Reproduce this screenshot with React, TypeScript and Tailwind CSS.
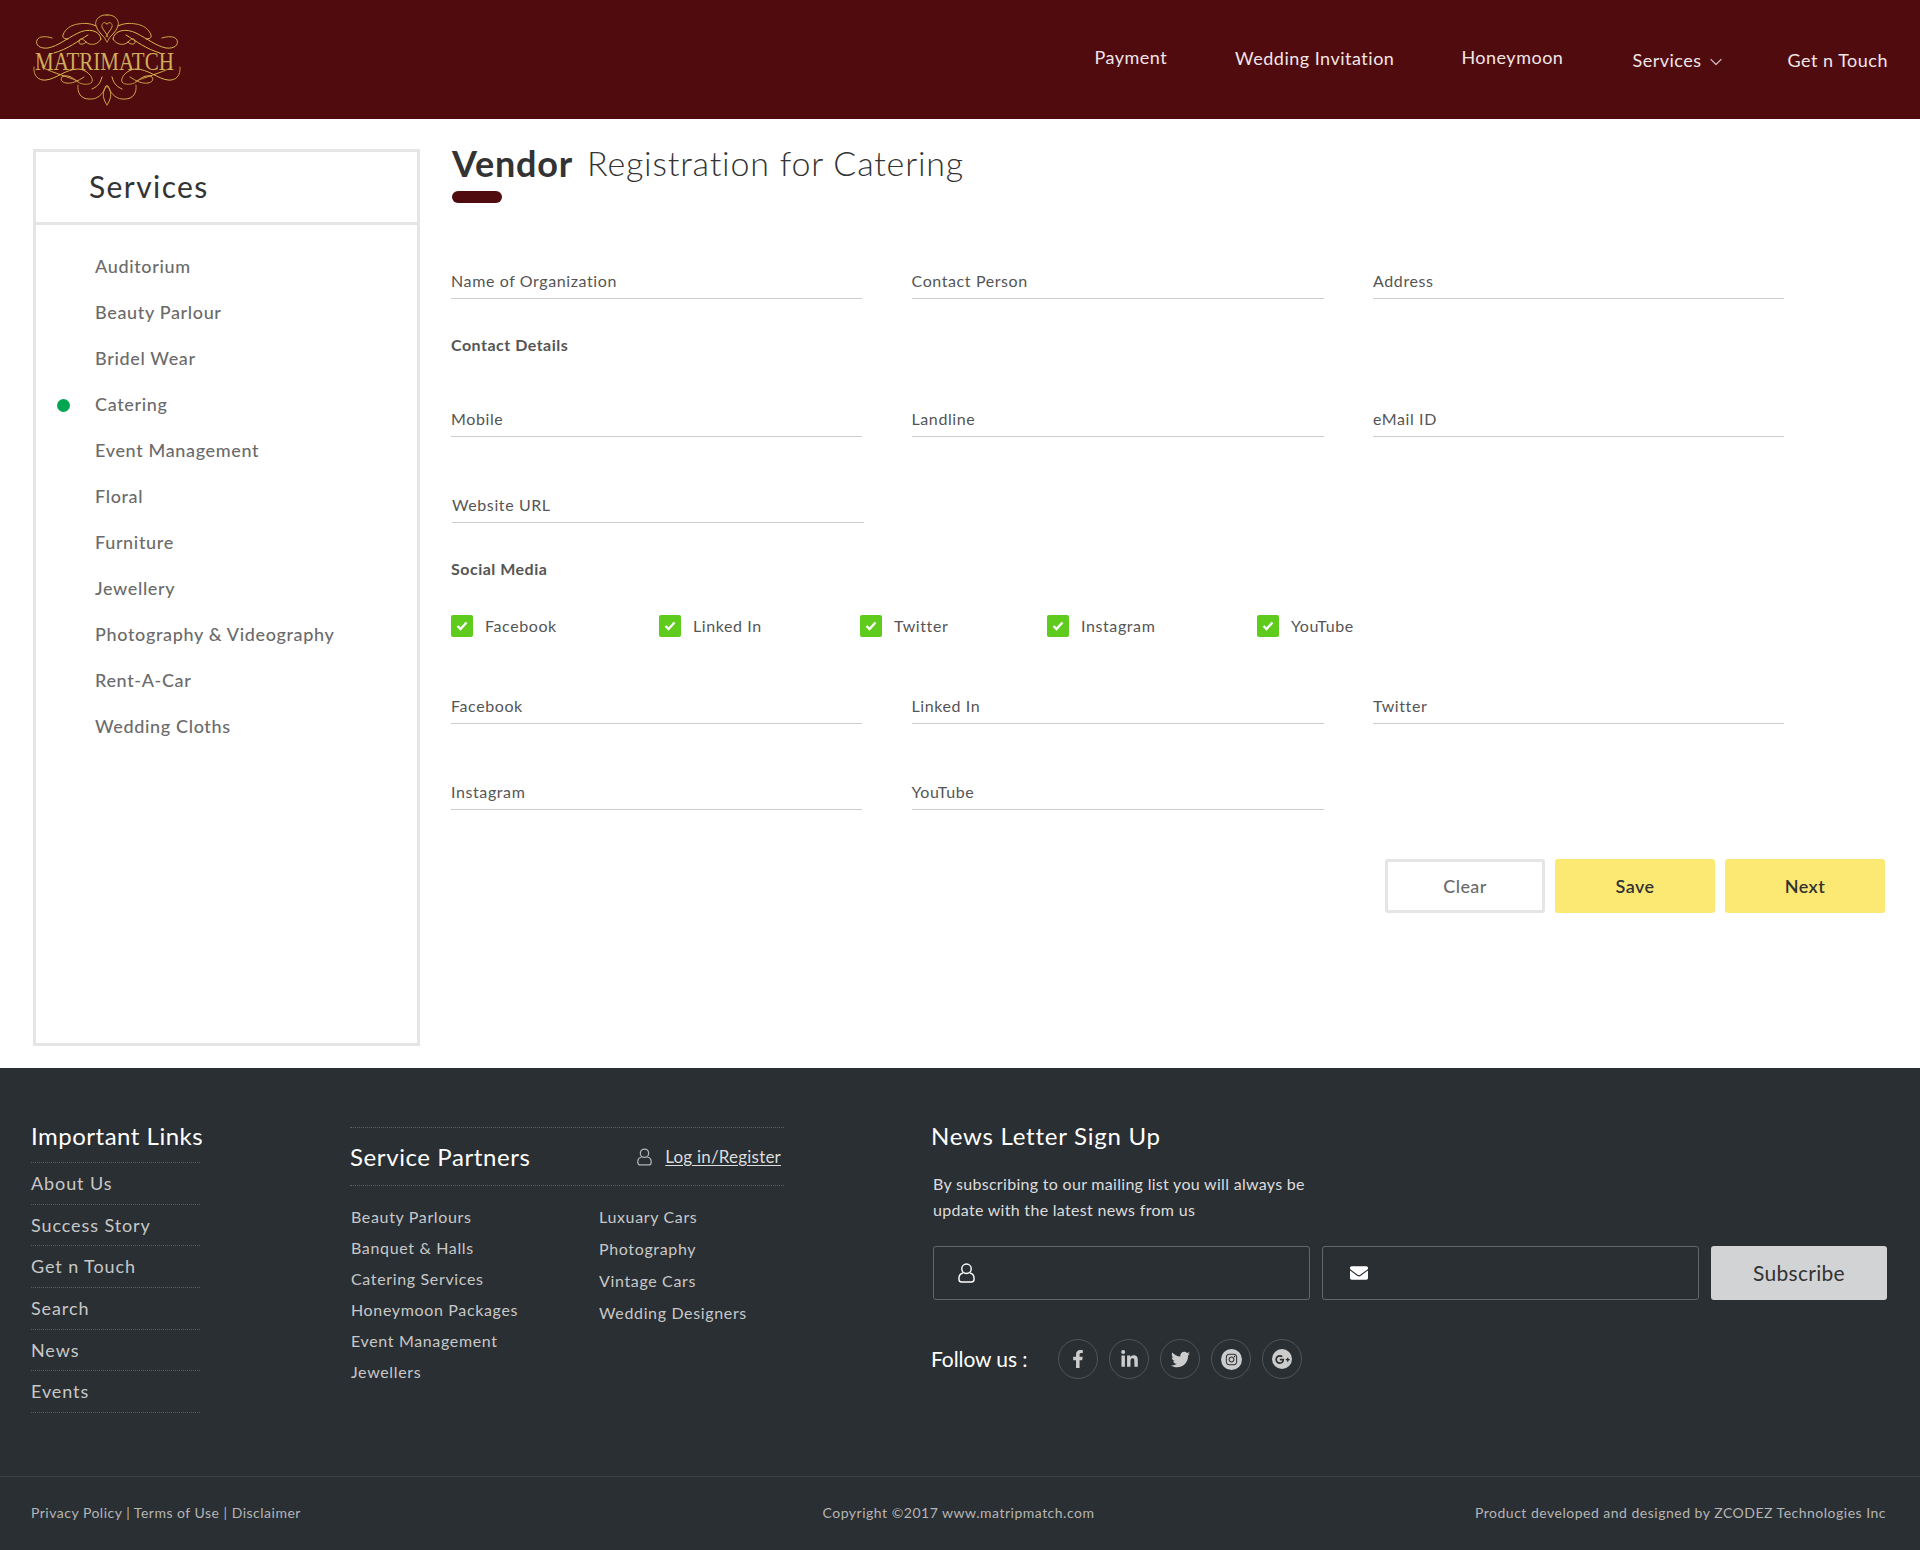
import { ChevronDown } from 'lucide-react';
import { FaEnvelope, FaFacebookF, FaGooglePlusG, FaInstagram, FaLinkedinIn, FaTwitter } from 'react-icons/fa';

const font = "font-['Lato','Open_Sans',sans-serif]";

const services = [
  'Auditorium',
  'Beauty Parlour',
  'Bridel Wear',
  'Catering',
  'Event Management',
  'Floral',
  'Furniture',
  'Jewellery',
  'Photography & Videography',
  'Rent-A-Car',
  'Wedding Cloths',
];

const socials = [
  { name: 'Facebook', width: 'w-[208px]' },
  { name: 'Linked In', width: 'w-[201px]' },
  { name: 'Twitter', width: 'w-[187px]' },
  { name: 'Instagram', width: 'w-[210px]' },
  { name: 'YouTube', width: 'w-[120px]' },
];

const importantLinks = ['About Us', 'Success Story', 'Get n Touch', 'Search', 'News', 'Events'];
const partnersLeft = ['Beauty Parlours', 'Banquet & Halls', 'Catering Services', 'Honeymoon Packages', 'Event Management', 'Jewellers'];
const partnersRight = ['Luxuary Cars', 'Photography', 'Vintage Cars', 'Wedding Designers'];

function Logo() {
  const half = (
    <g fill="none" stroke="url(#gold)" strokeWidth="1" strokeLinecap="round">
      <path d="M73 0 C66 -1 60 5 62 11 C64 18 70 20 73 27" />
      <path d="M73 9 C71 6 67 8 68 12 C69 15 72 17 74 22" />
      <path d="M67 24 C66 15 54 13 44 18 C32 24 24 31 14 33 C6 34 1 30 3 25 C5 21 12 21 18 23" />
      <path d="M62 11 C56 8 50 8 44 9 C37 10 31 14 29 20 C28 23 31 24 34 24" />
      <path d="M67 24 C64 30 56 31 52 27 C49 24 46 22 45 26 C44 30 50 30 52 27" />
      <path d="M54 20 C44 26 34 34 20 38" />
      <path d="M0 52 C-1 60 4 66 12 65 C22 64 32 54 44 54 C52 54 60 62 58 67 C56 70 48 70 44 67 C40 64 36 60 30 61 C26 62 26 67 32 68 C38 69 44 66 50 62" />
      <path d="M8 52 C14 56 28 60 44 66" />
      <path d="M44 70 C43 78 47 84 55 84 C63 85 69 79 71 73 C72 70 73 70 73 72" />
      <path d="M71 73 C68 79 69 84 73 90" />
      <path d="M58 74 C62 72 66 70 68 62" />
    </g>
  );
  return (
    <svg viewBox="-1 -1 148 92" className="w-[148px] h-[92px]">
      <defs>
        <linearGradient id="gold" x1="0" y1="0" x2="1" y2="1">
          <stop offset="0" stopColor="#b98a3a" />
          <stop offset="0.5" stopColor="#deb952" />
          <stop offset="1" stopColor="#b98a3a" />
        </linearGradient>
      </defs>
      {half}
      <g transform="translate(146 0) scale(-1 1)">{half}</g>
      <text transform="translate(1 55) scale(1 1.2)" fontFamily="'Liberation Serif', serif" fontSize="21" fill="#cfae5a">
        MATRIMATCH
      </text>
    </svg>
  );
}

function UserIcon({ className }: { className: string }) {
  return (
    <svg viewBox="0 0 18 21" fill="none" stroke="currentColor" strokeWidth="1.5" className={className}>
      <circle cx="9" cy="6" r="5" />
      <path d="M5.5 10.5 C3 11 1 13 1 16 V17 C1 19 2.5 20 4 20 H14 C15.5 20 17 19 17 17 V16 C17 13 15 11 12.5 10.5" />
    </svg>
  );
}

function Field({ label, className = '' }: { label: string; className?: string }) {
  return (
    <div className={`h-[40px] pt-[10px] flex items-start border-b border-[#cccccc] text-[16px] leading-[24px] text-[#555555] tracking-[0.6px] ${className}`}>
      {label}
    </div>
  );
}

function Header() {
  return (
    <header className="h-[119px] bg-[#500b0f] flex items-center justify-between pl-[33px] pr-[32px]">
      <Logo />
      <nav className="flex items-center text-[18px] text-[#f1e6e6] tracking-[0.5px]">
        <a className="mr-[68px] -mt-[4px]">Payment</a>
        <a className="mr-[67px] -mt-[3px]">Wedding Invitation</a>
        <a className="mr-[69px] -mt-[4px]">Honeymoon</a>
        <a className="mr-[62px] mt-[1px] flex items-center gap-[4px]">
          Services <ChevronDown size={20} strokeWidth={1.5} className="text-[#c9b3b3] mt-[3px]" />
        </a>
        <a className="mt-[1px]">Get n Touch</a>
      </nav>
    </header>
  );
}

function Sidebar() {
  return (
    <aside className="w-[387px] h-[897px] shrink-0 border-[3px] border-[#e5e5e5]">
      <div className="h-[73px] border-b-[3px] border-[#e5e5e5] pl-[53px] pb-[2px] flex items-center text-[30px] text-[#333333] tracking-[1.4px]">
        Services
      </div>
      <ul className="pt-[18px]">
        {services.map((item) => (
          <li key={item} className="relative h-[46px] pl-[59px] flex items-center text-[18px] font-medium text-[#6b6b6b] tracking-[0.65px]">
            {item === 'Catering' && <span className="absolute left-[21px] top-[18px] w-[13px] h-[13px] rounded-full bg-[#00a651]" />}
            {item}
          </li>
        ))}
      </ul>
    </aside>
  );
}

function VendorForm() {
  return (
    <section className="flex-1 pr-[35px]">
      <h1 className="h-[42px] -mt-[7px] pl-[1px] flex items-center text-[34px] leading-[42px] text-[#333333] font-light tracking-[0.8px]">
        <b className="font-bold text-[36px] mr-[14px]">Vendor</b> Registration for Catering
      </h1>
      <div className="mt-[7px] ml-[1px] w-[50px] h-[12px] rounded-[6px] bg-[#500b0f]" />

      <div className="mt-[56px] grid grid-cols-[411px_412px_411px] gap-x-[49.5px]">
        <Field label="Name of Organization" />
        <Field label="Contact Person" />
        <Field label="Address" />
      </div>
      <h3 className="mt-[34px] h-[24px] leading-[24px] text-[16px] font-bold text-[#555555] tracking-[0.5px]">Contact Details</h3>

      <div className="mt-[40px] grid grid-cols-[411px_412px_411px] gap-x-[49.5px]">
        <Field label="Mobile" />
        <Field label="Landline" />
        <Field label="eMail ID" />
      </div>
      <div className="mt-[46px] grid grid-cols-[411px_412px_411px] gap-x-[49.5px]">
        <Field label="Website URL" className="ml-[1px] w-[412px]" />
      </div>
      <h3 className="mt-[34px] h-[24px] leading-[24px] text-[16px] font-bold text-[#555555] tracking-[0.5px]">Social Media</h3>

      <div className="mt-[33px] flex items-center h-[24px]">
        {socials.map((s) => (
          <label key={s.name} className={`${s.width} flex items-center gap-[12px] text-[16px] text-[#555555] tracking-[0.6px]`}>
            <span className="w-[22px] h-[22px] rounded-[2px] bg-[#5ecb1d] flex items-center justify-center">
              <svg viewBox="0 0 12 10" className="w-[12px] h-[10px]" fill="none" stroke="#ffffff" strokeWidth="2.4">
                <path d="M1.5 5 L4.5 8 L10.5 1.5" />
              </svg>
            </span>
            {s.name}
          </label>
        ))}
      </div>

      <div className="mt-[46px] grid grid-cols-[411px_412px_411px] gap-x-[49.5px]">
        <Field label="Facebook" />
        <Field label="Linked In" />
        <Field label="Twitter" />
      </div>
      <div className="mt-[46px] grid grid-cols-[411px_412px_411px] gap-x-[49.5px]">
        <Field label="Instagram" />
        <Field label="YouTube" />
      </div>

      <div className="mt-[49px] flex justify-end gap-[10px] text-[18px] tracking-[0.4px]">
        <button className="w-[160px] h-[54px] rounded-[3px] border-[3px] border-[#e5e5e5] text-[#6b6b6b] font-medium">Clear</button>
        <button className="w-[160px] h-[54px] rounded-[3px] bg-[#fbe974] text-[#333333] font-semibold">Save</button>
        <button className="w-[160px] h-[54px] rounded-[3px] bg-[#fbe974] text-[#333333] font-semibold">Next</button>
      </div>
    </section>
  );
}

function SocialCircle({ children }: { children: React.ReactNode }) {
  return (
    <span className="w-[40px] h-[40px] rounded-full border border-[#50555a] flex items-center justify-center text-[#cccccc]">
      {children}
    </span>
  );
}

function Footer() {
  return (
    <footer className="h-[482px] bg-[#2a2f33] flex flex-col">
      <div className="flex-1 flex pl-[31px] pr-[33px] pt-[52px]">
        <div className="w-[169px] shrink-0">
          <h4 className="h-[42px] text-[24px] leading-[32px] text-white tracking-[0.5px] whitespace-nowrap">Important Links</h4>
          <ul className="border-t border-dotted border-[#5a5e62]">
            {importantLinks.map((l) => (
              <li key={l} className="h-[41.7px] flex items-center border-b border-dotted border-[#5a5e62] text-[18px] text-[#c8c8c8] tracking-[0.9px]">
                {l}
              </li>
            ))}
          </ul>
        </div>

        <div className="w-[434px] ml-[150px] shrink-0 mt-[7px]">
          <div className="h-[59px] flex items-center justify-between pr-[3px] border-y border-dotted border-[#5a5e62]">
            <span className="text-[24px] text-white tracking-[0.6px]">Service Partners</span>
            <span className="flex items-center gap-[13px] text-[17px] text-[#dddddd] tracking-[0.2px]">
              <UserIcon className="w-[15px] h-[18px] text-[#b5b5b5]" />
              <a className="underline underline-offset-2">Log in/Register</a>
            </span>
          </div>
          <div className="mt-[15px] pl-[1px] flex text-[16px] text-[#c8c8c8] tracking-[0.65px]">
            <ul className="w-[248px]">
              {partnersLeft.map((p) => (
                <li key={p} className="h-[31px] flex items-center">{p}</li>
              ))}
            </ul>
            <ul>
              {partnersRight.map((p) => (
                <li key={p} className="h-[32px] flex items-center">{p}</li>
              ))}
            </ul>
          </div>
        </div>

        <div className="flex-1 ml-[147px]">
          <h4 className="h-[32px] text-[24px] leading-[32px] text-white tracking-[0.75px]">News Letter Sign Up</h4>
          <p className="mt-[19px] ml-[2px] text-[16px] leading-[26px] text-[#dddddd] tracking-[0.3px]">
            By subscribing to our mailing list you will always be
            <br />
            update with the latest news from us
          </p>
          <div className="mt-[23px] ml-[2px] flex gap-[12px]">
            <div className="w-[377px] h-[54px] rounded-[3px] border border-[#63676b] flex items-center pl-[24px]">
              <UserIcon className="w-[17px] h-[20px] text-white" />
            </div>
            <div className="w-[377px] h-[54px] rounded-[3px] border border-[#63676b] flex items-center pl-[26px]">
              <FaEnvelope className="w-[20px] h-[18px] text-white" />
            </div>
            <button className="w-[176px] h-[54px] rounded-[3px] bg-[#d2d3d5] text-[#333333] text-[21px] tracking-[0.3px]">Subscribe</button>
          </div>
          <div className="mt-[39px] flex items-center">
            <span className="w-[127px] text-[21px] text-white tracking-[-0.1px]">Follow us :</span>
            <div className="flex gap-[11px]">
              <SocialCircle><FaFacebookF size={18} /></SocialCircle>
              <SocialCircle><FaLinkedinIn size={19} /></SocialCircle>
              <SocialCircle><FaTwitter size={19} /></SocialCircle>
              <SocialCircle>
                <span className="w-[21px] h-[21px] rounded-full bg-[#cccccc] flex items-center justify-center text-[#2a2f33]">
                  <FaInstagram size={13} />
                </span>
              </SocialCircle>
              <SocialCircle>
                <span className="w-[20px] h-[20px] rounded-full bg-[#cccccc] flex items-center justify-center text-[#2a2f33]">
                  <FaGooglePlusG size={15} />
                </span>
              </SocialCircle>
            </div>
          </div>
        </div>
      </div>

      <div className="h-[74px] pb-[2px] border-t border-[#3d4145] pl-[31px] pr-[34px] grid grid-cols-3 items-center text-[14px] text-[#b5b5b5] tracking-[0.5px]">
        <span>Privacy Policy | Terms of Use | Disclaimer</span>
        <span className="text-center">Copyright ©2017 www.matripmatch.com</span>
        <span className="text-right whitespace-nowrap">Product developed and designed by ZCODEZ Technologies Inc</span>
      </div>
    </footer>
  );
}

export default function App() {
  return (
    <div className={`w-[1920px] min-h-[1550px] bg-white ${font}`}>
      <Header />
      <main className="flex gap-[31px] pl-[33px] pt-[30px] pb-[22px]">
        <Sidebar />
        <VendorForm />
      </main>
      <Footer />
    </div>
  );
}
